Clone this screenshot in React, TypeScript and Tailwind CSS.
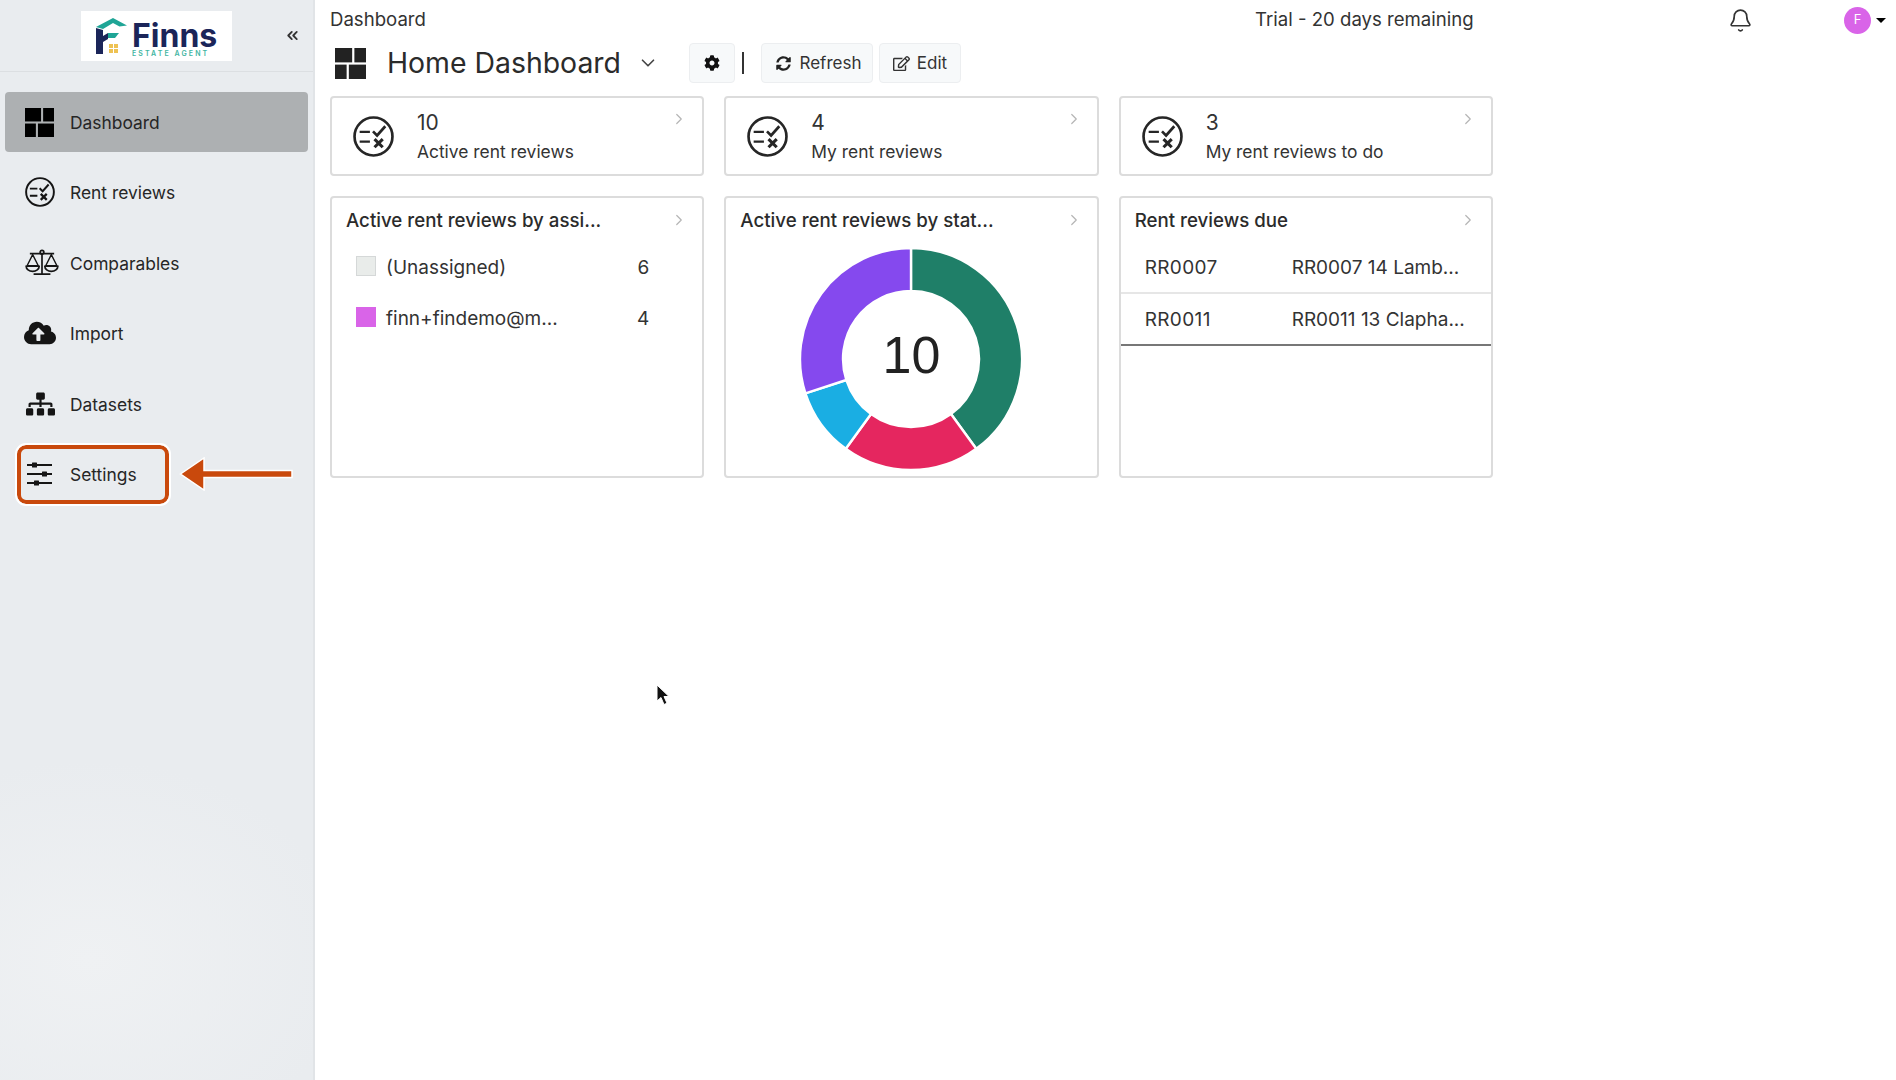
import { Bell, ChevronDown, ChevronRight, ChevronsLeft } from "lucide-react";
import { FaCloudUploadAlt, FaCog, FaRegEdit, FaSitemap, FaSyncAlt } from "react-icons/fa";

const font = { fontFamily: '"Inter", "Noto Sans", sans-serif' };

function GridIcon({ className }: { className?: string }) {
  return (
    <svg viewBox="0 0 28 28" className={className} fill="currentColor">
      <rect x="0" y="0" width="15.5" height="13" />
      <rect x="17.5" y="0" width="10.5" height="13" />
      <rect x="0" y="15" width="10.5" height="13" />
      <rect x="12.5" y="15" width="15.5" height="13" />
    </svg>
  );
}

function ReviewIcon({ className }: { className?: string }) {
  return (
    <svg viewBox="0 0 40 40" className={className} fill="none" stroke="currentColor" strokeWidth="2.6">
      <circle cx="20" cy="20" r="18.5" />
      <path d="M6.5 15.5h10M6.5 25h10" strokeWidth="2.4" />
      <path d="M19.5 15l4 4 8-9" />
      <path d="M21 22.5l8 8M29 22.5l-8 8" strokeWidth="3" />
    </svg>
  );
}

function ScaleIcon({ className }: { className?: string }) {
  return (
    <svg viewBox="0 0 36 30" className={className} fill="none" stroke="currentColor" strokeWidth="1.8">
      <path d="M5 5h26M18 6v20M9 27h18" />
      <circle cx="18" cy="3.5" r="2" />
      <path d="M8 6L2 18h12zM28 6l-6 12h12z" strokeWidth="1.5" />
      <path d="M1 18.5h14a7 5.5 0 0 1-14 0zM21 18.5h14a7 5.5 0 0 1-14 0z" />
    </svg>
  );
}

function SlidersIcon({ className }: { className?: string }) {
  return (
    <svg viewBox="0 0 26 24" className={className} fill="currentColor" stroke="currentColor">
      <path d="M0 3h25M0 12h25M0 21h25" strokeWidth="1.8" fill="none" />
      <rect x="5" y="0.5" width="5" height="5" rx="0.5" stroke="none" />
      <rect x="15" y="9.5" width="5" height="5" rx="0.5" stroke="none" />
      <rect x="7" y="18.5" width="5" height="5" rx="0.5" stroke="none" />
    </svg>
  );
}

function Logo() {
  return (
    <div className="flex h-[50px] w-[151px] items-center bg-white pl-[15px]">
      <svg viewBox="0 0 31 36" className="h-[36px] w-[31px]">
        <path d="M0 9L17 0l14 7.5-7.5 1L17 5 7 11z" fill="#1fa596" />
        <path d="M0 10l7 2v6l5-3v6l-5 3v12H0z" fill="#1b2559" />
        <path d="M12 15h11l-4 5h-7z" fill="#1fa596" />
        <path d="M13 26h4v4h-4zM18 26h4v4h-4zM13 31h4v4h-4zM18 31h4v4h-4z" fill="#eec253" />
      </svg>
      <div className="mt-[11px] ml-[5px] flex flex-col">
        <span className="text-[32px] leading-[24px] font-bold text-[#1b2559]">Finns</span>
        <span className="pt-[2px] text-[7px] leading-[8px] font-semibold tracking-[0.3em] whitespace-nowrap text-[#3fb5a2]">ESTATE AGENT</span>
      </div>
    </div>
  );
}

const navItems = [
  { label: "Rent reviews", icon: <ReviewIcon className="h-[30px] w-[30px]" /> },
  { label: "Comparables", icon: <ScaleIcon className="ml-[4px] h-[28px] w-[34px]" /> },
  { label: "Import", icon: <FaCloudUploadAlt className="h-[32px] w-[32px]" /> },
  { label: "Datasets", icon: <FaSitemap className="h-[28px] w-[29px]" /> },
  { label: "Settings", icon: <SlidersIcon className="h-[24px] w-[26px]" /> },
];

function Sidebar() {
  return (
    <aside className="flex h-[1080px] w-[315px] shrink-0 flex-col border-r-2 border-[#e1e4e7] bg-[#e9ecef] bg-[radial-gradient(ellipse_260px_200px_at_90px_960px,#eff1f3,#e9ecef)]">
      <div className="flex h-[72px] items-center border-b border-[#dcdfe2] pl-[81px]">
        <Logo />
        <ChevronsLeft className="ml-[52px] h-[17px] w-[17px] text-[#333]" strokeWidth={2.6} />
      </div>
      <div className="px-[5px] pt-[20px]">
        <div className="flex h-[60px] items-center rounded-[4px] bg-[#adb0b2] pl-[20px] text-[17.4px] text-[#262626]">
          <GridIcon className="h-[29px] w-[29px] text-black" />
          <span className="ml-[16px] pt-[2px]">Dashboard</span>
        </div>
        <div className="mt-[10.4px] flex flex-col gap-[10.4px]">
          {navItems.map((item) => (
            <div key={item.label} className="flex h-[60px] items-center text-[17.4px] text-[#262626]">
              <span className="mr-[10px] ml-[15px] flex w-[40px] items-center justify-center text-[#151515]">{item.icon}</span>
              <span className="pt-[2px]">{item.label}</span>
            </div>
          ))}
        </div>
      </div>
    </aside>
  );
}

function StatCard({ value, label }: { value: string; label: string }) {
  return (
    <div className="relative flex h-[80px] items-center rounded-[4px] border-2 border-[#dcdcdc] bg-white pl-[21px]">
      <ReviewIcon className="h-[41px] w-[41px] text-[#262626]" />
      <div className="ml-[23px] text-[#333]">
        <div className="pt-[1px] text-[21px] leading-[28px]">{value}</div>
        <div className="mt-[3px] text-[17.4px] leading-[24px]">{label}</div>
      </div>
      <ChevronRight className="absolute top-[12px] right-[14px] h-[18px] w-[18px] text-[#b5b5b5]" strokeWidth={1.6} />
    </div>
  );
}

function PanelHeader({ title }: { title: string }) {
  return (
    <div className="flex h-[44px] items-center justify-between pr-[14px] pl-[14px] text-[18.7px] font-medium text-[#2b2b2b]">
      <span className="pt-[2px]">{title}</span>
      <ChevronRight className="h-[18px] w-[18px] text-[#b5b5b5]" strokeWidth={1.6} />
    </div>
  );
}

function polar(r: number, deg: number) {
  const a = ((deg - 90) * Math.PI) / 180;
  return `${(120 + r * Math.cos(a)).toFixed(2)} ${(120 + r * Math.sin(a)).toFixed(2)}`;
}

function arc(from: number, to: number) {
  const large = to - from > 180 ? 1 : 0;
  return `M${polar(111, from)}A111 111 0 ${large} 1 ${polar(111, to)}L${polar(68, to)}A68 68 0 ${large} 0 ${polar(68, from)}Z`;
}

const segments = [
  { from: 0, to: 144, color: "#1f7f68" },
  { from: 144, to: 216, color: "#e5265f" },
  { from: 216, to: 252, color: "#1aaee3" },
  { from: 252, to: 360, color: "#8549ee" },
];

function Donut() {
  return (
    <div className="relative mx-auto mt-[-3px] h-[240px] w-[240px]">
      <svg viewBox="0 0 240 240" className="h-full w-full">
        {segments.map((s) => (
          <path key={s.color} d={arc(s.from, s.to)} fill={s.color} stroke="#fff" strokeWidth="2.4" />
        ))}
      </svg>
      <div
        className="absolute inset-0 flex items-center justify-center pb-[8px] text-[52px] text-[#222]"
        style={{ fontFamily: '"Liberation Sans", sans-serif' }}
      >
        10
      </div>
    </div>
  );
}

export default function App() {
  return (
    <div className="relative flex h-[1080px] w-[1896px] overflow-hidden bg-white text-[#262626]" style={font}>
      <Sidebar />
      <main className="flex-1 pl-[15px]">
        <div className="flex h-[40px] items-center text-[18.6px] whitespace-nowrap text-[#333]">
          <span className="w-[95px]">Dashboard</span>
          <span className="ml-[830px] w-[219px]">Trial - 20 days remaining</span>
          <Bell className="ml-[254px] h-[25px] w-[25px] text-[#333]" strokeWidth={1.6} />
          <span className="ml-[91px] flex h-[27px] w-[27px] items-center justify-center rounded-full bg-[#d964e8] text-[13px] text-white">F</span>
          <span className="ml-[5px] h-0 w-0 border-x-[5px] border-t-[5px] border-x-transparent border-t-black" />
        </div>
        <div className="flex h-[46px] items-center">
          <GridIcon className="ml-[5px] h-[31px] w-[31px] text-[#222]" />
          <span className="ml-[21px] text-[28.4px] text-[#2b2b2b]">Home Dashboard</span>
          <ChevronDown className="ml-[16px] h-[22px] w-[22px] text-[#444]" strokeWidth={1.8} />
          <button className="ml-[30px] flex h-[40px] w-[46px] items-center justify-center rounded-[4px] border border-[#eceef0] bg-[#f7f9fa]">
            <FaCog className="h-[16px] w-[16px] text-[#111]" />
          </button>
          <span className="ml-[7px] h-[22px] w-[2px] bg-[#333]" />
          <button className="ml-[17px] flex h-[40px] w-[112px] items-center justify-center gap-[8px] rounded-[4px] border border-[#eceef0] bg-[#f7f9fa] pt-[1px] pl-[4px] text-[17px] text-[#333]">
            <FaSyncAlt className="h-[15px] w-[15px] text-[#222]" />
            Refresh
          </button>
          <button className="ml-[6px] flex h-[40px] w-[82px] items-center justify-center gap-[7px] rounded-[4px] border border-[#eceef0] bg-[#f7f9fa] pt-[1px] text-[17px] text-[#333]">
            <FaRegEdit className="h-[17px] w-[17px] text-[#333]" />
            Edit
          </button>
        </div>
        <div className="mt-[10px] grid w-[1163px] grid-cols-3 gap-x-[20px] gap-y-[20px]">
          <StatCard value="10" label="Active rent reviews" />
          <StatCard value="4" label="My rent reviews" />
          <StatCard value="3" label="My rent reviews to do" />

          <div className="h-[282px] rounded-[4px] border-2 border-[#dcdcdc] bg-white">
            <PanelHeader title="Active rent reviews by assi..." />
            <div className="flex h-[50px] items-center pr-[53px] pl-[24px] text-[19px] text-[#333]">
              <span className="-mt-[2px] h-[20px] w-[20px] border border-[#d5d8d8] bg-[#e9ecea]" />
              <span className="ml-[10px] flex-1 pt-[3px]">(Unassigned)</span>
              <span className="pt-[3px]">6</span>
            </div>
            <div className="flex h-[50px] items-center pr-[53px] pl-[24px] text-[19px] text-[#333]">
              <span className="h-[20px] w-[20px] bg-[#d964e8]" />
              <span className="ml-[10px] flex-1 pt-[4px]">finn+findemo@m...</span>
              <span className="pt-[4px]">4</span>
            </div>
          </div>

          <div className="h-[282px] rounded-[4px] border-2 border-[#dcdcdc] bg-white">
            <PanelHeader title="Active rent reviews by stat..." />
            <Donut />
          </div>

          <div className="h-[282px] rounded-[4px] border-2 border-[#dcdcdc] bg-white">
            <PanelHeader title="Rent reviews due" />
            <div className="flex h-[52px] items-center border-b-2 border-[#e6e6e6] pt-[2px] pl-[24px] text-[19px] text-[#333]">
              <span className="w-[147px] tracking-[0.02em]">RR0007</span>
              <span>RR0007 14 Lamb...</span>
            </div>
            <div className="flex h-[52px] items-center border-b-2 border-[#777] pt-[2px] pl-[24px] text-[19px] text-[#333]">
              <span className="w-[147px] tracking-[0.02em]">RR0011</span>
              <span>RR0011 13 Clapha...</span>
            </div>
          </div>
        </div>
      </main>

      {/* annotation */}
      <div className="absolute top-[445px] left-[17px] h-[59px] w-[152px] rounded-[9px] border-[4.5px] border-[#c9490c] outline-2 outline-white" />
      <svg viewBox="0 0 116 34" className="absolute top-[457px] left-[179px] h-[34px] w-[116px]">
        <path d="M1.5 17L25 1v12.5h88v7H25V33z" fill="#c9490c" stroke="#fff" strokeWidth="1.5" />
      </svg>

      {/* cursor */}
      <svg viewBox="0 0 14 22" className="absolute top-[684px] left-[656px] h-[22px] w-[14px]">
        <path d="M1 1v16l4-3.5 3 7 3-1.3-3-6.7h5z" fill="#111" stroke="#fff" strokeWidth="1" />
      </svg>
    </div>
  );
}
